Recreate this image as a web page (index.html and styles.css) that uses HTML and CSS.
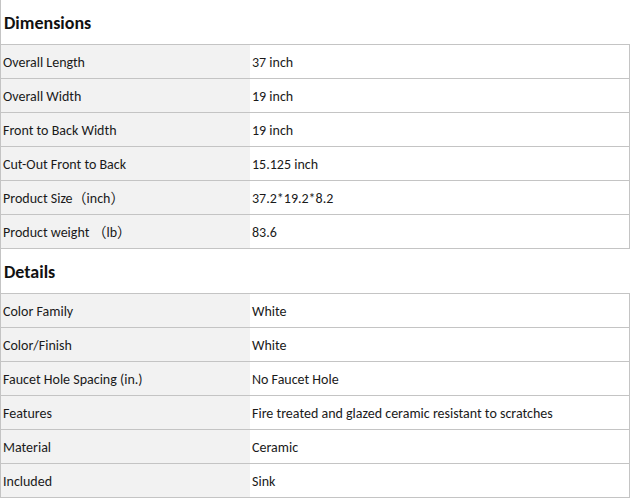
FILE: index.html
```html
<!DOCTYPE html>
<html>
<head>
<meta charset="utf-8">
<link rel="stylesheet" href="styles.css">
</head>
<body>
<div class="page">
  <div class="section-title">Dimensions</div>
  <div class="spec-table">
    <div class="row"><div class="label">Overall Length</div><div class="value">37 inch</div></div>
    <div class="row"><div class="label">Overall Width</div><div class="value">19 inch</div></div>
    <div class="row"><div class="label">Front to Back Width</div><div class="value">19 inch</div></div>
    <div class="row"><div class="label">Cut-Out Front to Back</div><div class="value">15.125 inch</div></div>
    <div class="row"><div class="label">Product Size（inch）</div><div class="value">37.2*19.2*8.2</div></div>
    <div class="row"><div class="label">Product weight （lb）</div><div class="value">83.6</div></div>
  </div>
  <div class="section-title">Details</div>
  <div class="spec-table">
    <div class="row"><div class="label">Color Family</div><div class="value">White</div></div>
    <div class="row"><div class="label">Color/Finish</div><div class="value">White</div></div>
    <div class="row"><div class="label">Faucet Hole Spacing (in.)</div><div class="value">No Faucet Hole</div></div>
    <div class="row"><div class="label">Features</div><div class="value">Fire treated and glazed ceramic resistant to scratches</div></div>
    <div class="row"><div class="label">Material</div><div class="value">Ceramic</div></div>
    <div class="row"><div class="label">Included</div><div class="value">Sink</div></div>
  </div>
</div>
</body>
</html>
```

FILE: styles.css
```css
html, body {
  margin: 0;
  padding: 0;
  background: #ffffff;
}
body {
  font-family: Carlito, Calibri, "Noto Sans CJK SC", sans-serif;
  font-size: 14px;
  color: #1a1a1a;
}
.page {
  width: 630px;
  border-left: 1px solid #c4c4c4;
  box-sizing: border-box;
}
.section-title {
  height: 45px;
  box-sizing: border-box;
  padding: 2px 0 0 3px;
  display: flex;
  align-items: center;
  font-weight: bold;
  font-size: 18px;
  line-height: 22px;
  color: #111;
  border-bottom: 1px solid #c4c4c4;
}
.spec-table {
  border-right: 1px solid #c4c4c4;
}
.row {
  display: grid;
  grid-template-columns: 249px 1fr;
  height: 34px;
  box-sizing: border-box;
  border-bottom: 1px solid #c4c4c4;
  line-height: 16px;
}
.label {
  background: #f2f2f2;
  display: flex;
  align-items: center;
  padding: 2px 0 0 2px;
}
.value {
  background: #ffffff;
  display: flex;
  align-items: center;
  padding: 2px 0 0 2px;
}
```
